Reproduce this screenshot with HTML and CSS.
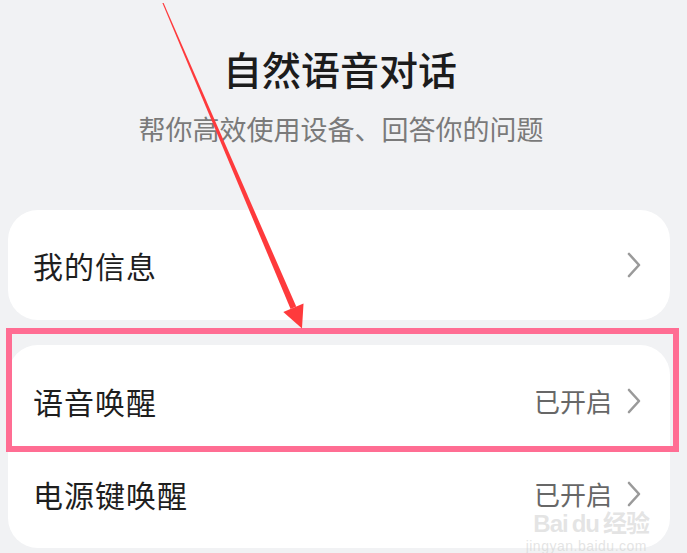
FILE: index.html
```html
<!DOCTYPE html>
<html lang="zh-CN">

<head>
    <meta charset="utf-8">
    <meta name="viewport" content="width=device-width, initial-scale=1.0">
    <title>自然语音对话</title>
    <link rel="stylesheet" href="styles.css">
</head>

<body>
    <div class="page">
        <!-- Cabecera -->
        <div class="header">
            <h1 class="title">自然语音对话</h1>
            <p class="subtitle">帮你高效使用设备、回答你的问题</p>
        </div>

        <!-- Tarjeta 1 -->
        <div class="card">
            <div class="row row-single">
                <span class="label">我的信息</span>
                <span class="right">
                    <svg class="chev" width="16" height="26" viewBox="0 0 16 26"><path d="M3 2 L13 13 L3 24" /></svg>
                </span>
            </div>
        </div>

        <!-- Tarjeta 2 -->
        <div class="card card-two">
            <div class="row row-first">
                <span class="label">语音唤醒</span>
                <span class="right">
                    <span class="value">已开启</span>
                    <svg class="chev" width="16" height="26" viewBox="0 0 16 26"><path d="M3 2 L13 13 L3 24" /></svg>
                </span>
            </div>
            <div class="row row-second">
                <span class="label">电源键唤醒</span>
                <span class="right">
                    <span class="value">已开启</span>
                    <svg class="chev" width="16" height="26" viewBox="0 0 16 26"><path d="M3 2 L13 13 L3 24" /></svg>
                </span>
            </div>
            <div class="highlight"></div>
        </div>

        <!-- Marca de agua -->
        <div class="watermark">
            <span class="wm-logo">Bai<span class="wm-du">du</span>经验</span>
            <span class="wm-url">jingyan.baidu.com</span>
        </div>
    </div>

    <!-- Flecha roja -->
    <svg class="arrow" width="687" height="553" viewBox="0 0 687 553">
        <polygon points="162.4,3 163.6,3 296.2,306.6 290.6,309" fill="#fe3a3c" />
        <polygon points="283.3,312.1 303.5,303.5 302,328.5" fill="#fe3a3c" />
    </svg>
</body>
</html>
```

FILE: styles.css
```css
/* Estilos de la pantalla de ajustes */
html, body {
    margin: 0;
    padding: 0;
}

body {
    width: 687px;
    height: 553px;
    overflow: hidden;
    background: #f1f2f4;
    font-family: "Noto Sans CJK SC", "Noto Sans", sans-serif;
    position: relative;
}

.page {
    padding: 0 17px 0 8px;
    position: relative;
    height: 553px;
}

.header {
    padding-top: 42px;
    text-align: center;
}

.title {
    margin: 0;
    font-size: 39px;
    line-height: 52px;
    font-weight: 500;
    color: #1c1c1c;
    padding-left: 2px;
}

.subtitle {
    margin: 16px 0 0 0;
    font-size: 27px;
    line-height: 38px;
    color: #7a7a7a;
    padding-left: 4px;
}

.card {
    background: #ffffff;
    border-radius: 30px;
    margin-top: 62px;
}

.card-two {
    margin-top: 25px;
    position: relative;
}

.row {
    display: flex;
    justify-content: space-between;
    align-items: center;
    padding: 0 28px 0 25px;
}

.row-single {
    height: 110px;
}

.row-first {
    height: 112px;
}

.row-second {
    height: 74px;
    padding-bottom: 17px;
}

.label {
    font-size: 30px;
    line-height: 1.2;
    color: #1e1e1e;
    letter-spacing: 1px;
}

.right {
    display: flex;
    align-items: center;
}

.value {
    font-size: 26px;
    line-height: 1;
    color: #676767;
    margin-right: 14px;
}

.chev {
    display: block;
}

.chev path {
    fill: none;
    stroke: #9a9a9a;
    stroke-width: 2.6;
    stroke-linecap: round;
    stroke-linejoin: round;
}

.highlight {
    position: absolute;
    top: -17px;
    left: -2px;
    right: -9px;
    height: 112px;
    border: 6px solid #ff6d93;
}

.watermark {
    position: absolute;
    right: 38px;
    bottom: 0;
    display: flex;
    flex-direction: column;
    align-items: flex-end;
    color: rgba(210, 210, 210, 0.6);
    font-family: "Liberation Sans", "Noto Sans CJK SC", sans-serif;
    line-height: 1;
}

.wm-logo {
    font-size: 24px;
    font-weight: bold;
    letter-spacing: -1px;
}

.wm-du {
    margin: 0 4px;
}

.wm-url {
    font-size: 14px;
    margin: 3px 2px 0 0;
    letter-spacing: 0.5px;
}

.arrow {
    position: absolute;
    top: 0;
    left: 0;
    pointer-events: none;
}
```
